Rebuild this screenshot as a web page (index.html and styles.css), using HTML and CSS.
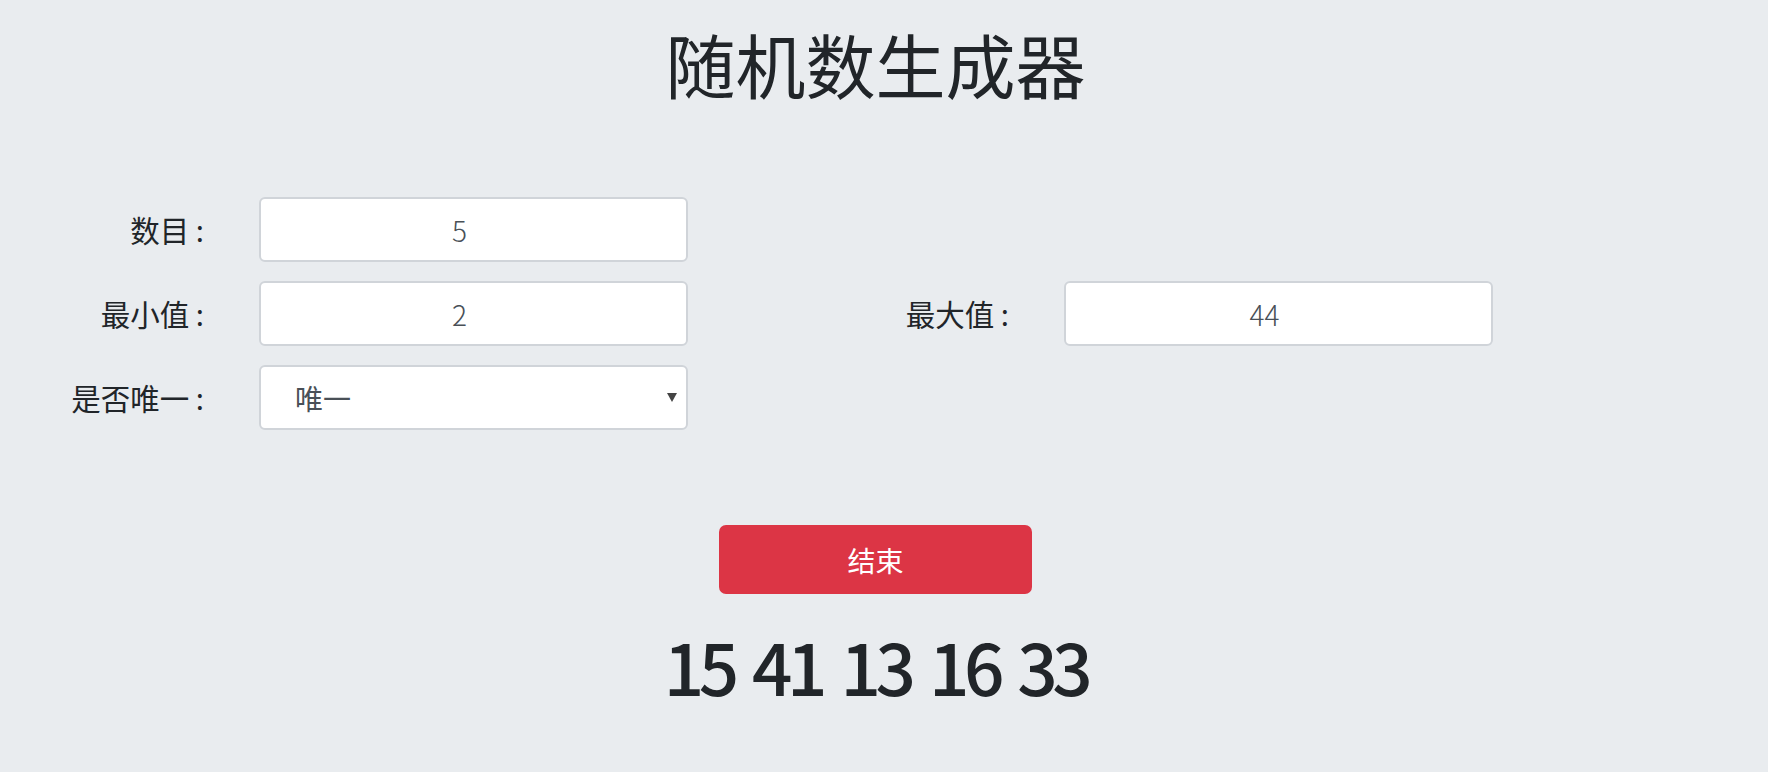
FILE: index.html
```html
<!DOCTYPE html>
<html lang="zh-CN">
<head>
<meta charset="utf-8">
<title>随机数生成器</title>
<link rel="stylesheet" href="styles.css">
</head>
<body>
<div class="page">
  <h1 class="title">随机数生成器</h1>
  <div class="form">
    <div class="row">
      <div class="field">
        <label class="label">数目 :</label>
        <input class="control" type="text" value="5">
      </div>
    </div>
    <div class="row">
      <div class="field">
        <label class="label">最小值 :</label>
        <input class="control" type="text" value="2">
      </div>
      <div class="field">
        <label class="label">最大值 :</label>
        <input class="control" type="text" value="44">
      </div>
    </div>
    <div class="row">
      <div class="field">
        <label class="label">是否唯一 :</label>
        <div class="select-wrap">
          <select class="control select">
            <option>唯一</option>
            <option>不唯一</option>
          </select>
        </div>
      </div>
    </div>
  </div>
  <div class="actions">
    <button class="btn-stop" type="button">结束</button>
  </div>
  <div class="result">15 41 13 16 33</div>
</div>
</body>
</html>
```
FILE: styles.css
```css
html, body {
  margin: 0;
  padding: 0;
}
body {
  background: #e9ecef;
  color: #212529;
  font-family: "Noto Sans CJK SC", "Noto Sans", sans-serif;
}
.page {
  width: 1751px;
  overflow: hidden;
}
.title {
  margin: 22px 0 0;
  font-size: 70px;
  font-weight: 400;
  line-height: 84px;
  text-align: center;
}
.form {
  margin-top: 91px;
  display: flex;
  flex-direction: column;
  gap: 19px;
}
.row {
  display: flex;
  gap: 117px;
}
.field {
  display: flex;
  align-items: center;
  gap: 55px;
}
.label {
  width: 204px;
  text-align: right;
  font-size: 29.5px;
  line-height: 1;
  white-space: pre;
}
.control {
  box-sizing: border-box;
  width: 429px;
  height: 65px;
  margin: 0;
  padding: 0 28px 0 0;
  border: 2px solid #d0d4d9;
  border-radius: 6px;
  background: #fff;
  color: #495057;
  font-family: inherit;
  font-size: 28px;
  font-weight: 300;
  text-align: center;
  outline: none;
}
.select-wrap {
  position: relative;
}
.select {
  display: block;
  appearance: none;
  -webkit-appearance: none;
  text-align: left;
  font-weight: 400;
  padding: 0 40px 0 34px;
}
.select-wrap::after {
  content: "";
  position: absolute;
  right: 11px;
  top: 28px;
  border-left: 5px solid transparent;
  border-right: 5px solid transparent;
  border-top: 9px solid #444;
  pointer-events: none;
}
.actions {
  margin-top: 95px;
  display: flex;
  justify-content: center;
}
.btn-stop {
  width: 313px;
  height: 69px;
  border: none;
  border-radius: 7px;
  background: #dc3545;
  color: #fff;
  font-family: inherit;
  font-size: 28px;
}
.result {
  margin-top: 23px;
  padding-bottom: 10px;
  text-align: center;
  font-size: 71px;
  font-weight: 500;
  line-height: 96px;
  letter-spacing: -5.5px;
  word-spacing: 8px;
}
```
